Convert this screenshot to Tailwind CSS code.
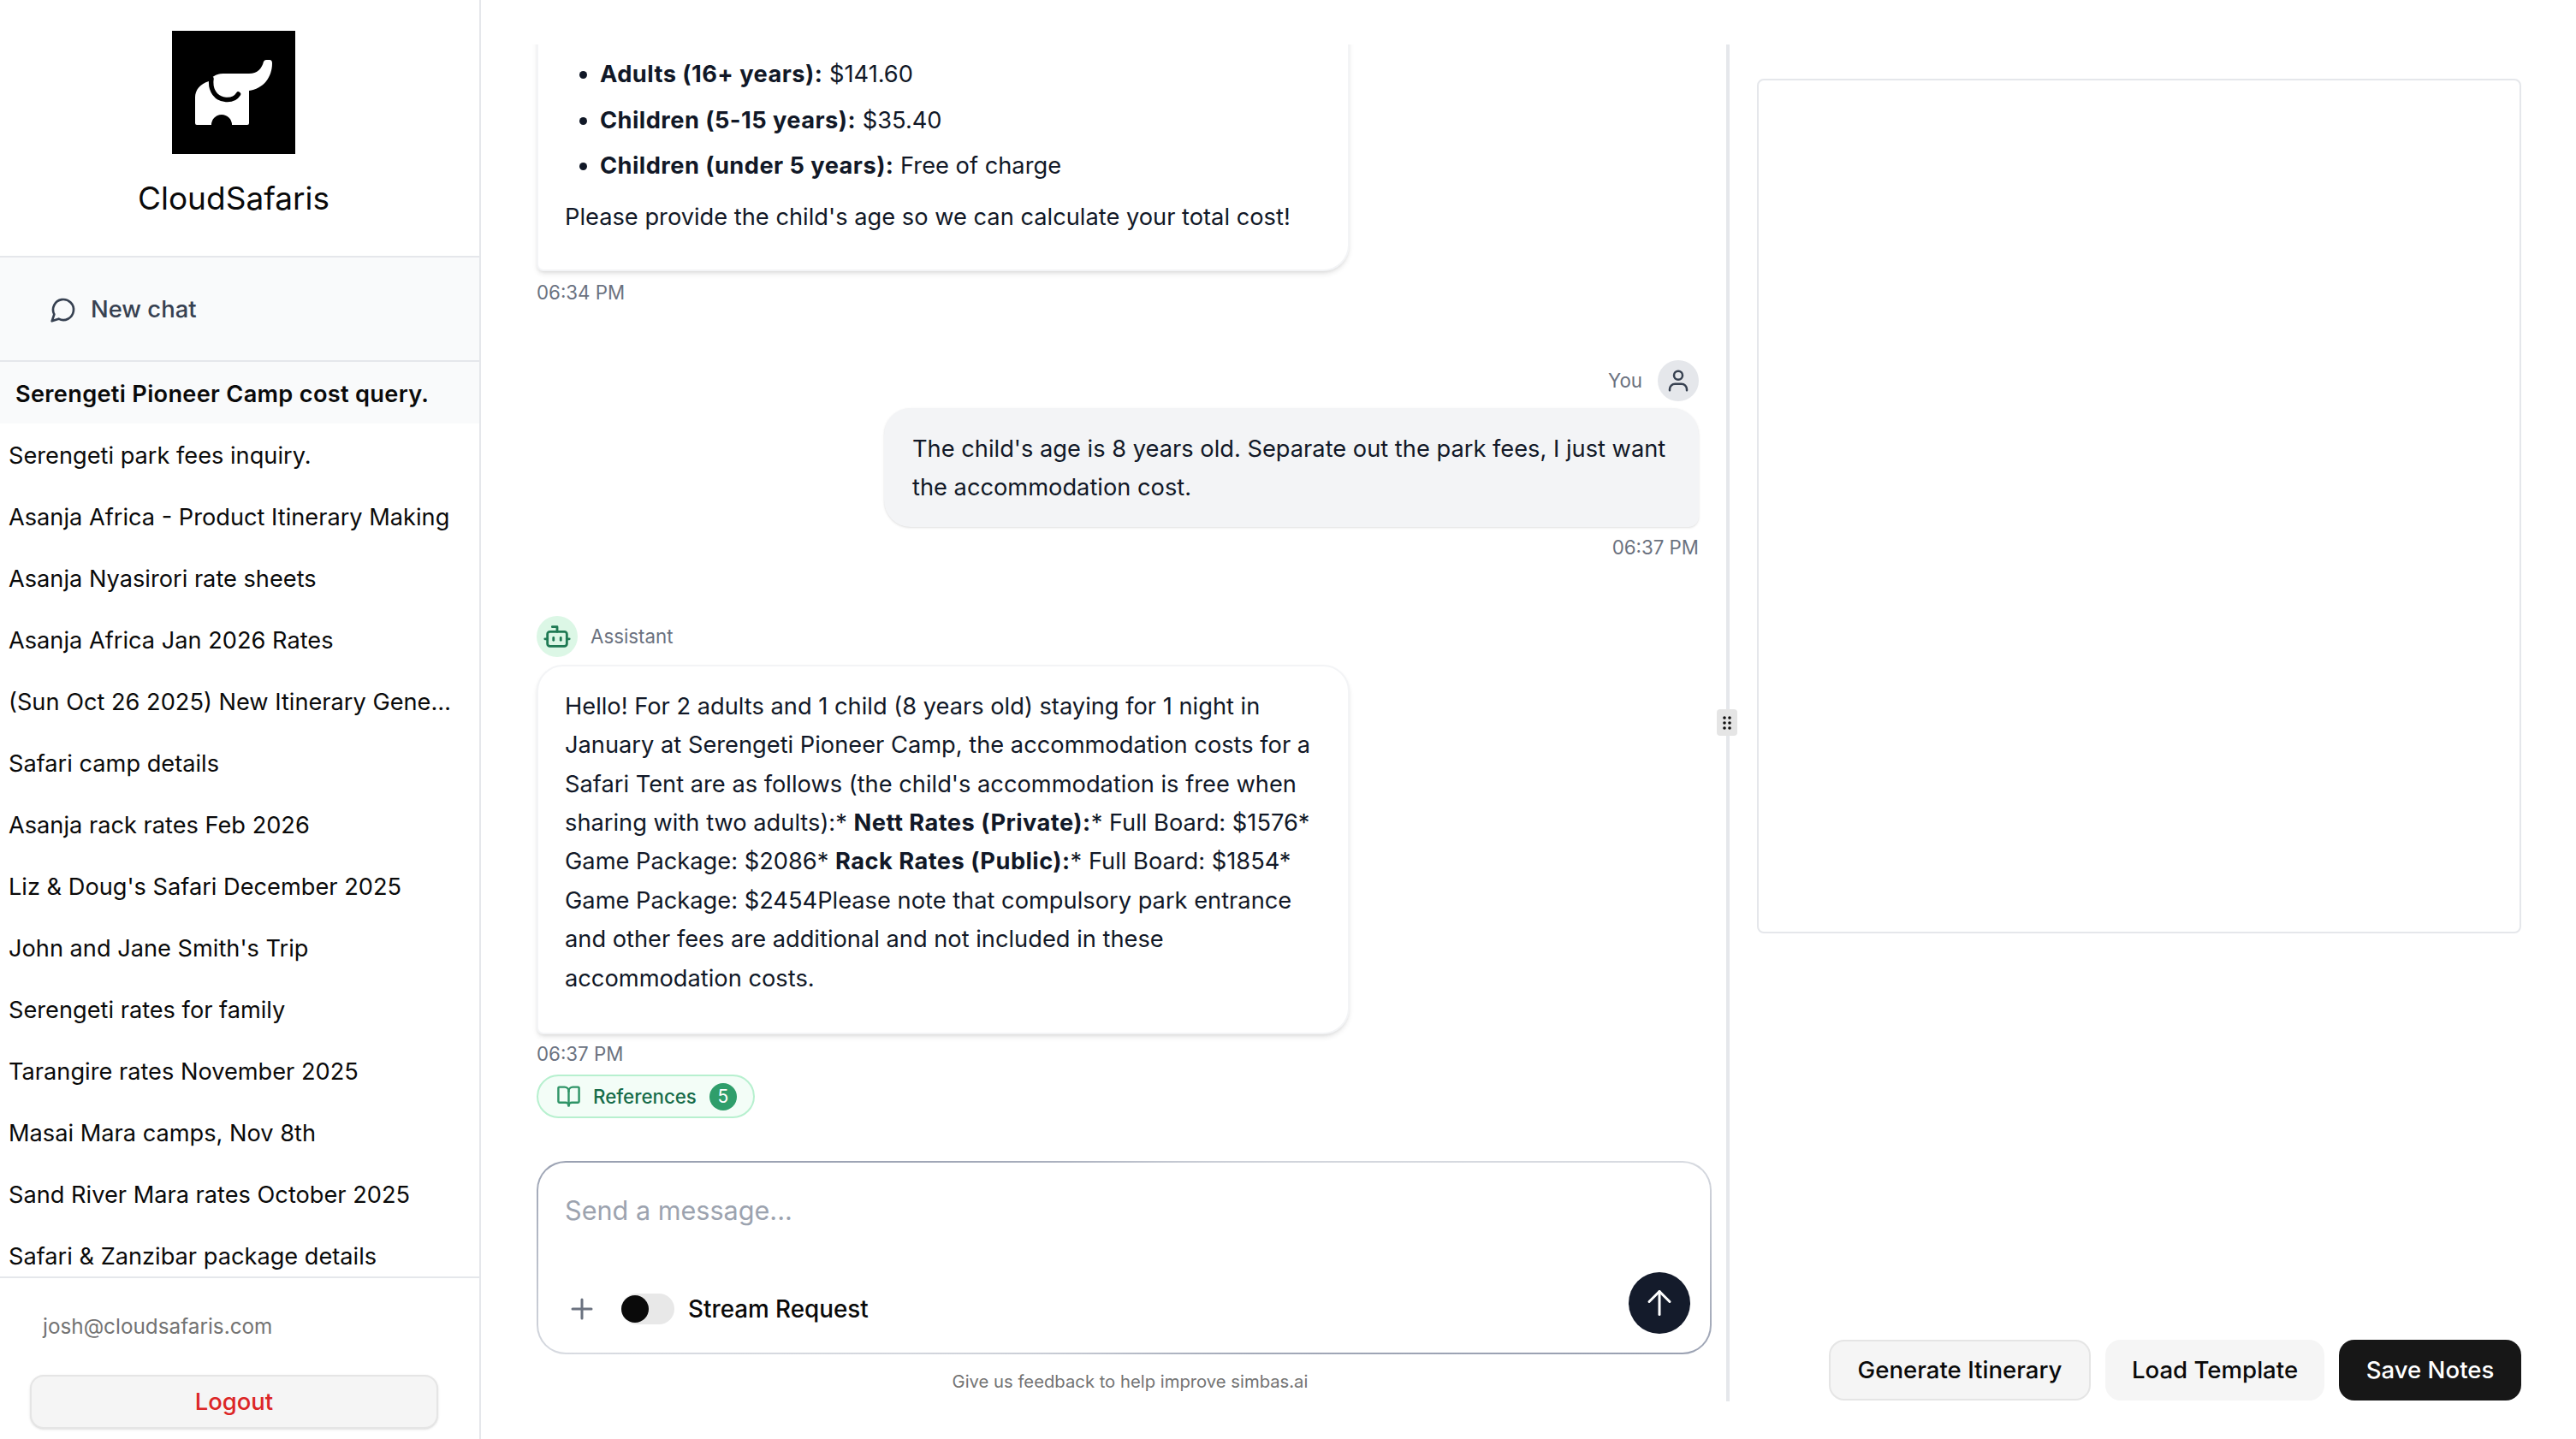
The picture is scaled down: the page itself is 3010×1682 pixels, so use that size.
<!DOCTYPE html>
<html lang="en">
<head>
  <meta charset="UTF-8" />
  <title>CloudSafaris</title>
  <script src="https://cdn.jsdelivr.net/npm/@tailwindcss/browser@4"></script>
</head>
<body class="bg-white font-['Inter',sans-serif] text-[#0a0a0a]">
  <div class="flex w-[3010px] h-[1682px] overflow-hidden">

    <!-- sidebar -->
    <aside class="w-[562px] h-full shrink-0 flex flex-col border-r-2 border-[#e5e7eb]">
      <div class="h-[301px] shrink-0 flex flex-col items-center pt-[36px] pr-[14px] border-b-2 border-[#e5e7eb]">
        <svg class="w-[144px] h-[144px]" viewBox="0 0 144 144">
          <rect width="144" height="144" fill="#000" />
          <path fill="#fff" d="M27 108V78C27 69 33 62 43 59C46 54 52 50 60 50H90C100 50 105 44 107 36Q108 34 110 34H114Q117 34 117 38C117 55 106 68 90 70V108Q90 110 88 110H70A12 12 0 0 0 46 110H29Q27 110 27 108Z" />
          <path fill="none" stroke="#000" stroke-width="5.5" stroke-linecap="round" d="M46 56C44 70 52 80 63 80.5C70 81 75 78 77.5 74" />
        </svg>
        <div class="mt-[30px] text-[37px] leading-[44px]">CloudSafaris</div>
      </div>
      <div class="h-[122px] shrink-0 flex items-center gap-[16px] pl-[58px] pt-[2px] bg-[#f9fafb] border-b-2 border-[#e5e7eb] text-[#374151] text-[27.4px] font-medium">
        <svg class="w-[32px] h-[32px]" viewBox="0 0 24 24" fill="none" stroke="#374151" stroke-width="2" stroke-linecap="round" stroke-linejoin="round"><path d="M7.9 20A9 9 0 1 0 4 16.1L2 22Z" /></svg>
        <span>New chat</span>
      </div>
      <ul class="flex-1 overflow-hidden text-[27.2px] leading-[76px]">
        <li class="h-[72px] pl-[18px] bg-[#f9fafb] font-semibold tracking-[0.3px]">Serengeti Pioneer Camp cost query.</li>
        <li class="h-[72px] pl-[10px]">Serengeti park fees inquiry.</li>
        <li class="h-[72px] pl-[10px]">Asanja Africa - Product Itinerary Making</li>
        <li class="h-[72px] pl-[10px]">Asanja Nyasirori rate sheets</li>
        <li class="h-[72px] pl-[10px]">Asanja Africa Jan 2026 Rates</li>
        <li class="h-[72px] pl-[10px] pr-[29px] truncate">(Sun Oct 26 2025) New Itinerary Generation</li>
        <li class="h-[72px] pl-[10px]">Safari camp details</li>
        <li class="h-[72px] pl-[10px]">Asanja rack rates Feb 2026</li>
        <li class="h-[72px] pl-[10px]">Liz &amp; Doug's Safari December 2025</li>
        <li class="h-[72px] pl-[10px]">John and Jane Smith's Trip</li>
        <li class="h-[72px] pl-[10px]">Serengeti rates for family</li>
        <li class="h-[72px] pl-[10px]">Tarangire rates November 2025</li>
        <li class="h-[72px] pl-[10px]">Masai Mara camps, Nov 8th</li>
        <li class="h-[72px] pl-[10px]">Sand River Mara rates October 2025</li>
        <li class="h-[72px] pl-[10px]">Safari &amp; Zanzibar package details</li>
      </ul>
      <div class="h-[190px] shrink-0 border-t-2 border-[#e5e7eb] pl-[35px]">
        <div class="pl-[15px] pt-[40px] text-[24.3px] leading-[32px] text-[#737373]">josh@cloudsafaris.com</div>
        <button class="mt-[41px] w-[477px] h-[63px] rounded-[16px] bg-[#f5f5f5] border-2 border-[#e5e5e5] shadow-sm text-[27.4px] font-medium text-[#dc2626]">Logout</button>
      </div>
    </aside>

    <!-- chat column -->
    <main class="relative w-[1459px] h-[1586px] mt-[52px] shrink-0 flex flex-col pl-[65px] pr-[17px] border-r-4 border-[#e5e7eb]">
      <div class="flex-1 min-h-0 overflow-hidden flex flex-col justify-end -ml-[12px] pl-[12px] pb-[50px] pr-[15px] text-[27.25px] leading-[45.4px] text-[#111827]">

        <div class="shrink-0 w-[950px] pt-[40px] pb-[39px] px-[31px] bg-white rounded-br-[31px] rounded-bl-[8px] border-2 border-[#f3f4f6] shadow-md">
          <ul class="list-disc pl-[41px]">
            <li><strong class="font-bold tracking-[0.45px]">Adults (16+ years):</strong> $141.60</li>
            <li class="mt-[8px]"><strong class="font-bold tracking-[0.45px]">Children (5-15 years):</strong> $35.40</li>
            <li class="mt-[8px]"><strong class="font-bold tracking-[0.45px]">Children (under 5 years):</strong> Free of charge</li>
          </ul>
          <p class="mt-[14px]">Please provide the child's age so we can calculate your total cost!</p>
        </div>
        <div class="shrink-0 mt-[9px] text-[22.3px] leading-[32px] text-[#6b7280]">06:34 PM</div>

        <div class="shrink-0 mt-[63px] flex items-center justify-end gap-[18px]">
          <span class="text-[22.3px] leading-[32px] text-[#6b7280]">You</span>
          <div class="w-[48px] h-[48px] rounded-full bg-[#e5e7eb] flex items-center justify-center">
            <svg class="w-[30px] h-[30px]" viewBox="0 0 24 24" fill="none" stroke="#374151" stroke-width="2" stroke-linecap="round"><circle cx="12" cy="7" r="4" /><path d="M4 21v-1a5 5 0 0 1 5-5h6a5 5 0 0 1 5 5v1" /></svg>
          </div>
        </div>
        <div class="shrink-0 self-end mt-[8px] w-[952px] px-[33px] pt-[25px] pb-[23px] bg-[#f3f4f6] rounded-[31px] rounded-br-[12px] shadow-sm">
          The child's age is 8 years old. Separate out the park fees, I just want the accommodation cost.
        </div>
        <div class="shrink-0 mt-[8px] text-right text-[22.3px] leading-[32px] text-[#6b7280]">06:37 PM</div>

        <div class="shrink-0 mt-[64px] flex items-center gap-[15px]">
          <div class="w-[48px] h-[48px] rounded-full bg-[#dcf7e6] flex items-center justify-center">
            <svg class="w-[34px] h-[34px]" viewBox="0 0 24 24" fill="none" stroke="#1f7a54" stroke-width="2" stroke-linecap="round" stroke-linejoin="round"><path d="M12 8V4H8" /><rect x="4" y="8" width="16" height="12" rx="2" /><path d="M2 14h2" /><path d="M20 14h2" /><path d="M15 13v2" /><path d="M9 13v2" /></svg>
          </div>
          <span class="text-[22.3px] leading-[32px] text-[#6b7280]">Assistant</span>
        </div>
        <div class="shrink-0 mt-[9px] w-[950px] pt-[24px] pb-[41px] px-[31px] bg-white rounded-[31px] rounded-bl-[8px] border-2 border-[#f3f4f6] shadow-md">
          Hello! For 2 adults and 1 child (8 years old) staying for 1 night in January at Serengeti Pioneer Camp, the accommodation costs for a Safari Tent are as follows (the child's accommodation is free when sharing with two adults):* <strong class="font-bold tracking-[0.45px]">Nett Rates (Private):</strong>* Full Board: $1576* Game Package: $2086* <strong class="font-bold tracking-[0.45px]">Rack Rates (Public):</strong>* Full Board: $1854* Game Package: $2454Please note that compulsory park entrance and other fees are additional and not included in these accommodation costs.
        </div>
        <div class="shrink-0 mt-[7px] text-[22.3px] leading-[32px] text-[#6b7280]">06:37 PM</div>
        <div class="shrink-0 mt-[8px] w-[255px] h-[51px] flex items-center pl-[21px] rounded-full bg-[#f3fdf7] border-2 border-[#b7f0cf]">
          <svg class="w-[29px] h-[29px]" viewBox="0 0 24 24" fill="none" stroke="#2f9467" stroke-width="2" stroke-linecap="round" stroke-linejoin="round"><path d="M12 7v14" /><path d="M3 18a1 1 0 0 1-1-1V4a1 1 0 0 1 1-1h5a4 4 0 0 1 4 4 4 4 0 0 1 4-4h5a1 1 0 0 1 1 1v13a1 1 0 0 1-1 1h-6a3 3 0 0 0-3 3 3 3 0 0 0-3-3z" /></svg>
          <span class="ml-[14px] text-[22.3px] font-medium text-[#166c4a] leading-[32px]">References</span>
          <span class="ml-[15px] w-[32px] h-[32px] rounded-full bg-[#2f9e6b] text-white text-[21px] flex items-center justify-center">5</span>
        </div>
      </div>

      <!-- input -->
      <div class="shrink-0 h-[226px] rounded-[34px] p-[2px] bg-[conic-gradient(from_280deg,#9aa1b2_0deg,#d8dbe1_160deg,#9aa1b2_180deg,#d8dbe1_340deg,#9aa1b2_360deg)]">
        <div class="relative w-full h-full rounded-[32px] bg-white pl-[31px] pt-[36px]">
          <div class="text-[30.6px] leading-[40px] text-[#9ca3af]">Send a message...</div>
          <div class="mt-[77px] flex items-center">
            <svg class="ml-[7px] w-[26px] h-[26px]" viewBox="0 0 26 26" fill="none" stroke="#6b7280" stroke-width="3" stroke-linecap="round"><path d="M13 2v22" /><path d="M2 13h22" /></svg>
            <div class="ml-[33px] w-[62px] h-[36px] rounded-full bg-[#e8e8e8] flex items-center">
              <div class="w-[32px] h-[32px] rounded-full bg-[#0a0a0a]"></div>
            </div>
            <span class="ml-[16px] text-[27.8px] font-medium leading-[36px]">Stream Request</span>
          </div>
          <button class="absolute right-[23px] bottom-[22px] w-[72px] h-[72px] rounded-full bg-[#141b2b] flex items-center justify-center">
            <svg class="w-[36px] h-[36px]" viewBox="0 0 24 24" fill="none" stroke="#fff" stroke-width="2" stroke-linecap="round" stroke-linejoin="round"><path d="M12 21V3" /><path d="M4 11l8-8 8 8" /></svg>
          </button>
        </div>
      </div>
      <div class="shrink-0 h-[55px] pt-[18px] pl-[14px] text-center text-[20.25px] leading-[28px] text-[#737373]">Give us feedback to help improve simbas.ai</div>

      <!-- resize handle -->
      <div class="absolute right-[-13px] top-[777px] w-[24px] h-[31px] rounded-[4px] bg-[#e5e5e5] flex items-center justify-center">
        <svg class="w-[14px] h-[20px]" viewBox="0 0 14 20" fill="#111"><circle cx="4" cy="4" r="1.8" /><circle cx="10" cy="4" r="1.8" /><circle cx="4" cy="10" r="1.8" /><circle cx="10" cy="10" r="1.8" /><circle cx="4" cy="16" r="1.8" /><circle cx="10" cy="16" r="1.8" /></svg>
      </div>
    </main>

    <!-- notes panel -->
    <section class="flex-1 h-[1637px] flex flex-col justify-between pl-[32px] pr-[64px] pt-[92px]">
      <div class="w-[893px] h-[999px] rounded-[8px] border-2 border-[#e5e7eb] bg-white"></div>
      <div class="flex justify-end gap-[17px] text-[27.6px] font-medium">
        <button class="w-[306px] h-[71px] rounded-[18px] bg-[#f5f5f5] border-2 border-[#e5e5e5]">Generate Itinerary</button>
        <button class="w-[256px] h-[71px] rounded-[18px] bg-[#f5f5f5]">Load Template</button>
        <button class="w-[213px] h-[71px] rounded-[18px] bg-[#171717] text-white">Save Notes</button>
      </div>
    </section>
  </div>
</body>
</html>
